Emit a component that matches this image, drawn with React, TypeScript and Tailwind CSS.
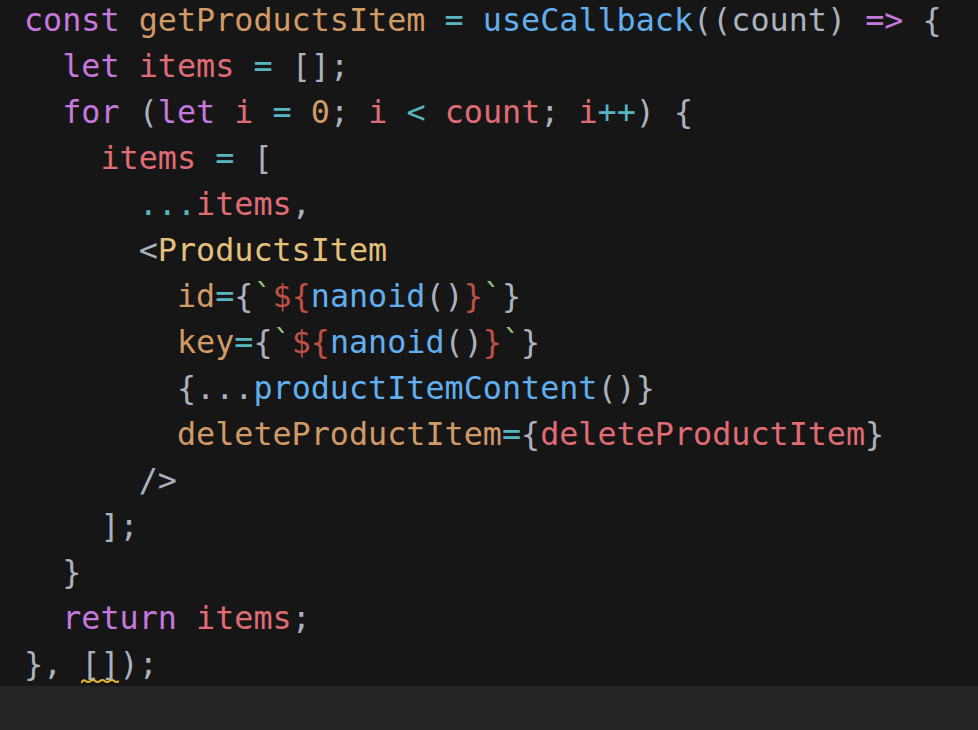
import React from "react";

type Tok = [string, string];

const P = "text-[#c678dd]"; // purple
const O = "text-[#d19a66]"; // orange
const B = "text-[#61afef]"; // blue
const R = "text-[#e06c75]"; // red
const C = "text-[#56b6c2]"; // cyan
const G = "text-[#abb2bf]"; // gray
const Y = "text-[#e5c07b]"; // yellow
const T = "text-[#be5046]"; // template
const K = "text-[#98c379]"; // backtick

const lines: Tok[][] = [
  [[P, "const"], [G, " "], [O, "getProductsItem"], [G, " "], [C, "="], [G, " "], [B, "useCallback"], [G, "((count) "], [P, "=>"], [G, " {"]],
  [[G, "  "], [P, "let"], [G, " "], [R, "items"], [G, " "], [C, "="], [G, " [];"]],
  [[G, "  "], [P, "for"], [G, " ("], [P, "let"], [G, " "], [R, "i"], [G, " "], [C, "="], [G, " "], [O, "0"], [G, "; "], [R, "i"], [G, " "], [C, "<"], [G, " "], [R, "count"], [G, "; "], [R, "i"], [C, "++"], [G, ") {"]],
  [[G, "    "], [R, "items"], [G, " "], [C, "="], [G, " ["]],
  [[G, "      "], [C, "..."], [R, "items"], [G, ","]],
  [[G, "      <"], [Y, "ProductsItem"]],
  [[G, "        "], [O, "id"], [C, "="], [G, "{"], [K, "`"], [T, "${"], [B, "nanoid"], [G, "()"], [T, "}"], [K, "`"], [G, "}"]],
  [[G, "        "], [O, "key"], [C, "="], [G, "{"], [K, "`"], [T, "${"], [B, "nanoid"], [G, "()"], [T, "}"], [K, "`"], [G, "}"]],
  [[G, "        {"], [G, "..."], [B, "productItemContent"], [G, "()}"]],
  [[G, "        "], [O, "deleteProductItem"], [C, "="], [G, "{"], [R, "deleteProductItem"], [G, "}"]],
  [[G, "      />"]],
  [[G, "    ];"]],
  [[G, "  }"]],
  [[G, "  "], [P, "return"], [G, " "], [R, "items"], [G, ";"]],
];

export default function App() {
  return (
    <div className="w-[978px] h-[730px] bg-[#161616] overflow-hidden flex flex-col">
      <div
        className="h-[686px] pl-[24px] pt-0 overflow-hidden"
        style={{ fontFamily: '"DejaVu Sans Mono", "Liberation Mono", monospace' }}
      >
        <div className="-mt-[3px] text-[31.75px] leading-[46px] whitespace-pre">
          {lines.map((ln, i) => (
            <div key={i} className="h-[46px]">
              {ln.map(([c, t], j) => (
                <span key={j} className={c}>
                  {t}
                </span>
              ))}
            </div>
          ))}
          <div className="h-[46px]">
            <span className={G}>{"}, "}</span>
            <span className={`${G} relative inline-block leading-[46px]`}>
              {"[]"}
              <svg
                className="absolute left-0 top-[37px] z-10 block"
                width="38"
                height="7"
                viewBox="0 0 38 7"
              >
                <path
                  d="M0 5 Q2.4 1 4.75 3 T9.5 3 T14.25 3 T19 3 T23.75 3 T28.5 3 T33.25 3 T38 3"
                  fill="none"
                  stroke="#e8b62c"
                  strokeWidth="2"
                />
              </svg>
            </span>
            <span className={G}>{");"}</span>
          </div>
        </div>
      </div>
      <div className="flex-1 bg-[#242424]" />
    </div>
  );
}
